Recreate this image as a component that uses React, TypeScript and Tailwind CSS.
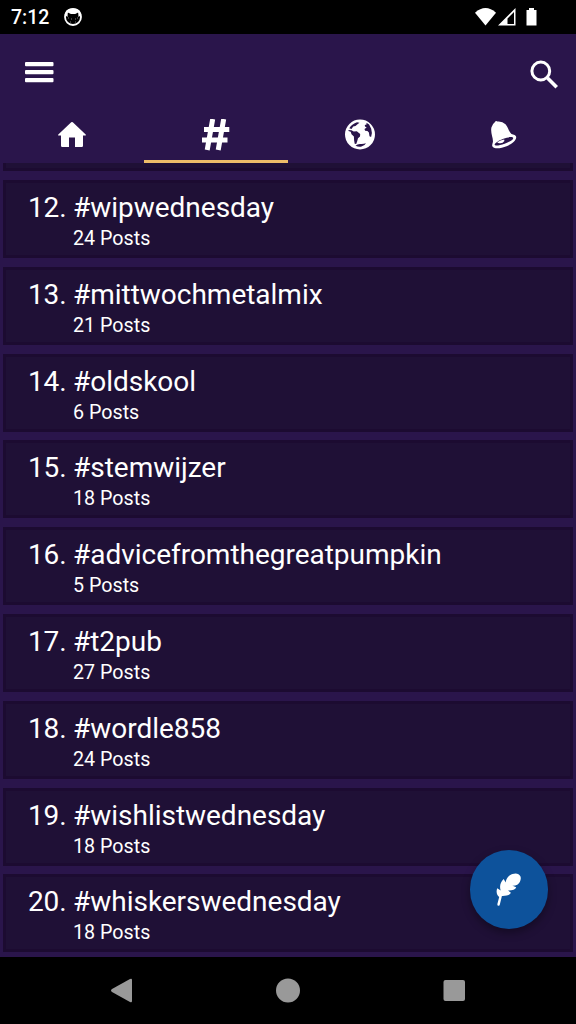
const tags: [number, string, number][] = [
  [12, "wipwednesday", 24],
  [13, "mittwochmetalmix", 21],
  [14, "oldskool", 6],
  [15, "stemwijzer", 18],
  [16, "advicefromthegreatpumpkin", 5],
  [17, "t2pub", 27],
  [18, "wordle858", 24],
  [19, "wishlistwednesday", 18],
  [20, "whiskerswednesday", 18],
];

function StatusBar() {
  return (
    <div className="flex h-[34px] shrink-0 items-center bg-black px-[11px] text-white">
      <span className="w-[52px] pt-px text-[19.500px] font-medium leading-6">7:12</span>
      <svg width="20" height="20" viewBox="0 0 20 20">
        <circle cx="10" cy="10" r="8" fill="none" stroke="white" strokeWidth="1.8" />
        <path d="M2 8C2 3 5 1.500 10 1.500S18 3 18 8l-2.500 2-.3-4.500-3 1.500H8L4.800 5.500 4.500 10z" fill="white" />
        <path d="M5 11h1M8 12h1M12 12h1M14 11h1M7 15h1M12 15h1" stroke="#777" />
      </svg>
      <svg width="64" height="20" viewBox="0 0 64 20" className="ml-auto mr-[26px]" fill="white">
        <path d="M0 5.200Q10.500-4 21 5.200L10.500 18Z" transform="translate(0 .5)" />
        <path fillRule="evenodd" d="M23 18.500 40.500 1v17.500ZM32.500 11.500V17H39V5Z" />
        <path d="M51.500 3H54V1h5v2h2.500v15.500h-10z" />
      </svg>
    </div>
  );
}

function Header() {
  return (
    <header className="h-[129px] shrink-0">
      <div className="flex h-[76px] justify-between pl-[25px] pr-[17px]">
        <svg width="29" height="21" viewBox="0 0 29 21" className="mt-7" fill="white">
          <rect y="0" width="28.500" height="4.200" rx="1" />
          <rect y="8" width="28.500" height="4.200" rx="1" />
          <rect y="16" width="28.500" height="4.200" rx="1" />
        </svg>
        <svg width="29" height="29" viewBox="0 0 29 29" className="mt-[26px]" fill="none" stroke="white">
          <circle cx="10.800" cy="11" r="8.900" strokeWidth="3" />
          <path d="m17.500 18 9.200 9.200" strokeWidth="3.600" />
        </svg>
      </div>
      <nav className="grid h-[53px] grid-cols-4">
        <div className="flex justify-center pr-px pt-[8px]">
          <svg width="32" height="32" viewBox="0 0 32 32" fill="white">
            <path d="M15.200 4.300q.8-.7 1.600 0L29.700 16.500q.8 1.100-.4 1.100H27v10.200q0 1.200-1.200 1.200H19V19.500h-6V29H6.200Q5 29 5 27.800V17.600H2.700q-1.200 0-.4-1.100z" />
          </svg>
        </div>
        <div className="flex justify-center border-b-[3px] border-[#edbd69] pt-[9px]">
          <svg width="30" height="32" viewBox="0 0 30 32" fill="none" stroke="white">
            <path d="M11.700 0 6.200 31M22.700 0l-5.500 31" strokeWidth="5" />
            <path d="M3 10.500h25.300M1 21h25.500" strokeWidth="4.800" />
          </svg>
        </div>
        <div className="flex justify-center pt-[9px]">
          <svg width="30" height="31" viewBox="0 0 30 31">
            <circle cx="15" cy="15.500" r="15" fill="white" />
            <g fill="#2a154b">
              <path d="M4.300 9.200Q7.300 4.700 12 3.300l2.500.4-2.300 1.700-1.700 1.700-2.300.5-1.700 2.400z" />
              <path d="m3.500 11 3 .2 2.200 1.200 3.100-.2 3.400 2.700-.2 2.700-2 1.700-.8 3-1 2.700-1.500-.3-.6-3.500-.2-3.700-2.400-2.300-.8-2.500-2.200-.7z" />
              <path d="m21.500 3.800 2.600 1.700 2.100 4.200.7 4.300-.8 4-1.600-.7-.6-3.700-1.500-1.600-2.300-.2-.6-1.900 2.200-1.500-1.700-.9-.2-1.500 1.700-.5z" />
              <path d="M10.500 26.700q2-2 5-1.800t5.500-.7q-1.500 2.700-4.500 3.300t-6-.8z" />
            </g>
          </svg>
        </div>
        <div className="flex justify-center pt-[10px]">
          <svg width="28" height="30" viewBox="0 0 28 30">
            <path fill="white" d="M5 2Q5.700.4 7.500 1.500q4.700-.5 8 2.700c2.700 3 3.300 7.500 5.700 9.500 2.700 1.200 5.200 1.300 5 3.800-.3 3.500-5 6.800-9.600 8.700C11.800 28.200 5 29.400 2.800 27c-1.400-1.700-.2-3.200.1-5C3.400 18 .3 13 1.400 7.500Q2.300 4 5 2z" />
            <path fill="#2a154b" d="M4.600 24.800c.2-2 4.600-4.500 8.800-6.100s9.400-2.300 9.800-.7c.3 1.400-3.700 3.900-8.600 5.700s-9.600 2.500-10 1.100z" />
            <path fill="white" d="M7.200 22.200q3-2.200 7-2.700l.2 1.500q-1.500 2.300-4.300 2.200-1.800.2-2.900-1z" />
          </svg>
        </div>
      </nav>
    </header>
  );
}

export default function App() {
  return (
    <div className="relative flex h-[1024px] w-[576px] flex-col overflow-hidden bg-[#2a154b] font-[Roboto,sans-serif] text-white">
      <StatusBar />
      <Header />
      <main className="min-h-0 flex-1 overflow-hidden px-[3px]">
        <div className="h-2 border-x-[3px] border-b-[3px] border-[#1c0b31] bg-[#1f1036]" />
        <div className="flex flex-col gap-[8.800px] pt-[9px]">
          {tags.map(([rank, name, posts]) => (
            <article key={rank} className="h-[78px] shrink-0 border-[3px] border-[#1c0b31] bg-[#1f1036] pl-[22px] pt-[7px]">
              <h2 className="flex text-[28px] font-normal leading-[36px]">
                <span className="w-[45px] tracking-[-0.15px]">{rank}.</span>
                <span className="tracking-[-0.02px]">#{name}</span>
              </h2>
              <p className="ml-[45px] text-[19.700px] leading-[26px]">{posts} Posts</p>
            </article>
          ))}
        </div>
      </main>
      <footer className="flex h-[67px] shrink-0 justify-center bg-black">
        <svg width="360" height="67" viewBox="0 0 360 67" fill="#999">
          <path d="M4 32 22 22q2-1 2 1v21q0 2-2 1L4 35q-2-1.500 0-3" />
          <circle cx="180" cy="33.500" r="12" />
          <rect x="335.500" y="23" width="21.500" height="21" rx="2" />
        </svg>
      </footer>
      <button aria-label="Compose" className="absolute left-[470px] top-[850px] flex h-[79px] w-[78px] items-center justify-center rounded-full bg-[#0d529b] shadow-[0_4px_8px_rgba(0,0,0,0.35)]">
        <svg width="26" height="34" viewBox="0 0 26 34" fill="white">
          <path d="M2.400 32.700Q1 32.500 1.500 30.500L3.200 24C1 22.500-.2 19 1.200 15.200L4.700 17.500C3.300 13.500 4.300 9 7.700 6L9.700 9.500C9.700 6.500 12 2.500 16.500 1c3.500-1.200 6.700-.4 8 2.500 1 3-.7 6.500-3.200 8.300q-2.300 1-5.300.8l4.200 1.600c-.7 2.300-4.200 3.500-8.200 3.300l2.900 2.300c-1.300 2.600-5.300 3.200-9 3.100L3.900 31.200q-.2 1.600-1.500 1.500z" />
        </svg>
      </button>
    </div>
  );
}
